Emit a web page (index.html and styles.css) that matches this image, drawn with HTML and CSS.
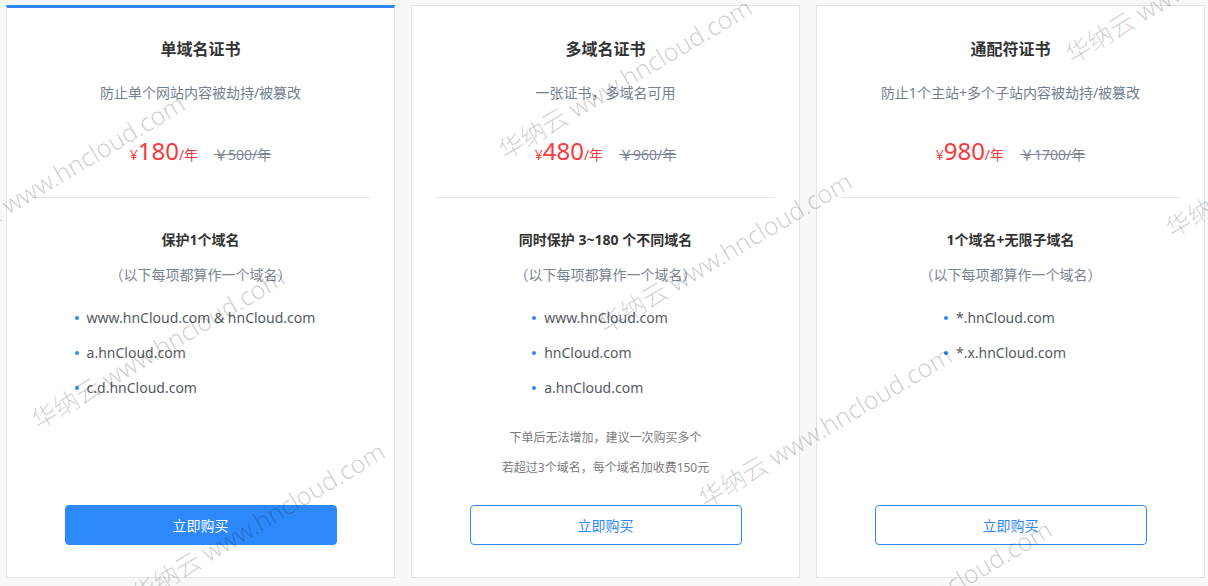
FILE: index.html
```html
<!DOCTYPE html>
<html lang="zh-CN">
<head>
<meta charset="utf-8">
<title>SSL证书</title>
<link rel="stylesheet" href="styles.css">
</head>
<body>
<div class="page">
  <div class="cards">
    <section class="card card--active">
      <h2 class="card-title">单域名证书</h2>
      <p class="card-desc">防止单个网站内容被劫持/被篡改</p>
      <div class="price"><span class="cur">¥</span><span class="amount">180</span><span class="unit">/年</span><del class="orig">￥500/年</del></div>
      <div class="divider"></div>
      <h3 class="feat-title">保护1个域名</h3>
      <p class="feat-sub">（以下每项都算作一个域名）</p>
      <ul class="domains">
        <li>www.hnCloud.com &amp; hnCloud.com</li>
        <li>a.hnCloud.com</li>
        <li>c.d.hnCloud.com</li>
      </ul>
      <button class="buy buy--primary">立即购买</button>
    </section>
    <section class="card">
      <h2 class="card-title">多域名证书</h2>
      <p class="card-desc">一张证书，多域名可用</p>
      <div class="price"><span class="cur">¥</span><span class="amount">480</span><span class="unit">/年</span><del class="orig">￥960/年</del></div>
      <div class="divider"></div>
      <h3 class="feat-title">同时保护 3~180 个不同域名</h3>
      <p class="feat-sub">（以下每项都算作一个域名）</p>
      <ul class="domains">
        <li>www.hnCloud.com</li>
        <li>hnCloud.com</li>
        <li>a.hnCloud.com</li>
      </ul>
      <div class="notes">
        <p>下单后无法增加，建议一次购买多个</p>
        <p>若超过3个域名，每个域名加收费150元</p>
      </div>
      <button class="buy">立即购买</button>
    </section>
    <section class="card">
      <h2 class="card-title">通配符证书</h2>
      <p class="card-desc">防止1个主站+多个子站内容被劫持/被篡改</p>
      <div class="price"><span class="cur">¥</span><span class="amount">980</span><span class="unit">/年</span><del class="orig">￥1700/年</del></div>
      <div class="divider"></div>
      <h3 class="feat-title">1个域名+无限子域名</h3>
      <p class="feat-sub">（以下每项都算作一个域名）</p>
      <ul class="domains">
        <li>*.hnCloud.com</li>
        <li>*.x.hnCloud.com</li>
      </ul>
      <button class="buy">立即购买</button>
    </section>
  </div>
  <div class="watermarks" aria-hidden="true">
    <span class="wm" style="left:-60px;top:234px">华纳云 www.hncloud.com</span>
    <span class="wm" style="left:507px;top:138px">华纳云 www.hncloud.com</span>
    <span class="wm" style="left:1074px;top:42px">华纳云 www.hncloud.com</span>
    <span class="wm" style="left:40px;top:408px">华纳云 www.hncloud.com</span>
    <span class="wm" style="left:607px;top:312px">华纳云 www.hncloud.com</span>
    <span class="wm" style="left:1174px;top:216px">华纳云 www.hncloud.com</span>
    <span class="wm" style="left:140px;top:582px">华纳云 www.hncloud.com</span>
    <span class="wm" style="left:707px;top:486px">华纳云 www.hncloud.com</span>
    <span class="wm" style="left:807px;top:660px">华纳云 www.hncloud.com</span>
  </div>
</div>
</body>
</html>
```
FILE: styles.css
```css
html, body {
  margin: 0;
  padding: 0;
}

body {
  background: #f7f8fa;
  font-family: "Noto Sans", "Noto Sans CJK SC", sans-serif;
  color: #333;
}

.page {
  position: relative;
  width: 1208px;
  height: 586px;
  overflow: hidden;
}

.cards {
  display: flex;
  gap: 16px;
  padding: 5px 0 0 6px;
}

.card {
  width: 389px;
  height: 573px;
  box-sizing: border-box;
  background: #fff;
  border: 1px solid #e4e5e7;
  display: flex;
  flex-direction: column;
  align-items: center;
  padding: 32px 0 32px;
}

.card--active {
  border-top: 3px solid #2d88fa;
  padding-top: 30px;
}

.card-title {
  margin: 0;
  font-size: 16px;
  line-height: 22px;
  font-weight: 700;
  color: #333;
}

.card-desc {
  margin: 23px 0 0;
  font-size: 14px;
  line-height: 20px;
  color: #737f8f;
}

.price {
  margin-top: 33px;
  height: 30px;
  line-height: 30px;
  font-size: 24px;
  color: #f5393c;
  white-space: nowrap;
}

.price .cur {
  font-size: 14px;
  line-height: 1;
}

.price .amount {
  font-size: 24px;
}

.price .unit {
  font-size: 14px;
  line-height: 1;
}

.price .orig {
  margin-left: 16px;
  font-size: 14px;
  line-height: 1;
  color: #7d8694;
  text-decoration: line-through;
}

.divider {
  align-self: stretch;
  margin: 31px 24px 0;
  height: 1px;
  background: #e6e7e9;
}

.feat-title {
  margin: 32px 0 0;
  font-size: 14px;
  line-height: 20px;
  font-weight: 700;
  color: #333;
}

.feat-sub {
  margin: 15px 0 0;
  font-size: 14px;
  line-height: 20px;
  color: #7b8593;
}

.domains {
  list-style: none;
  margin: 15px 0 0;
  padding: 0 12px 0 0;
}

.domains li {
  position: relative;
  padding-left: 13px;
  font-size: 14px;
  line-height: 35px;
  color: #555a62;
  white-space: nowrap;
}

.domains li::before {
  content: "";
  position: absolute;
  left: 1px;
  top: 16px;
  width: 4px;
  height: 4px;
  border-radius: 50%;
  background: #2d88fa;
}

.notes {
  margin-top: 18px;
  text-align: center;
}

.notes p {
  margin: 0;
  font-size: 12px;
  line-height: 30px;
  color: #7a7a7a;
}

.buy {
  margin-top: auto;
  width: 272px;
  height: 40px;
  box-sizing: border-box;
  border: 1px solid #2d88fa;
  border-radius: 4px;
  background: #fff;
  color: #2d88fa;
  font-family: "Noto Sans CJK SC", "Noto Sans", sans-serif;
  font-size: 14px;
  cursor: pointer;
}

.buy--primary {
  background: #2d88fa;
  color: #fff;
}

.watermarks {
  position: absolute;
  inset: 0;
  pointer-events: none;
  overflow: hidden;
}

.wm {
  position: absolute;
  font-family: "Noto Sans", "Noto Sans CJK SC", sans-serif;
  font-weight: 300;
  font-size: 25px;
  line-height: 25px;
  white-space: nowrap;
  color: rgba(0, 0, 0, 0.2);
  transform-origin: 0 100%;
  transform: rotate(-30.7deg);
}
```
